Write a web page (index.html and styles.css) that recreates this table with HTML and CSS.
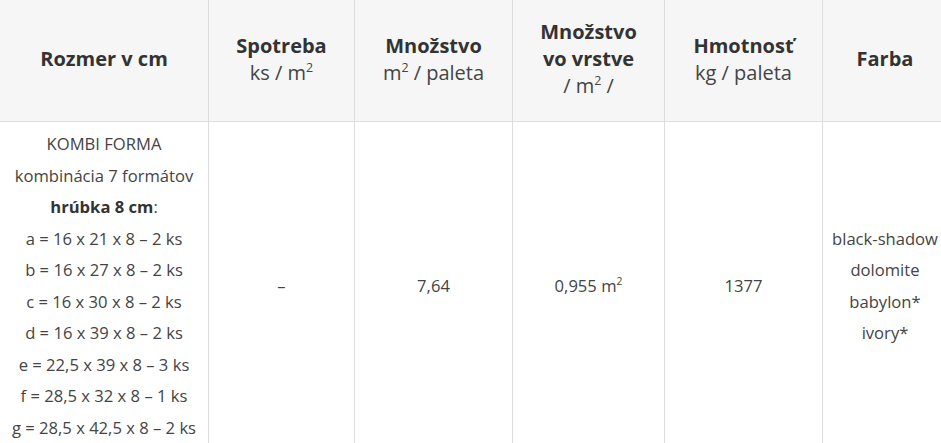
FILE: index.html
```html
<!DOCTYPE html>
<html lang="sk">
<head>
<meta charset="utf-8">
<link rel="stylesheet" href="styles.css">
</head>
<body>
<table class="spec">
  <colgroup>
    <col class="c1"><col class="c2"><col class="c3"><col class="c4"><col class="c5"><col class="c6">
  </colgroup>
  <thead>
    <tr>
      <th><strong>Rozmer v cm</strong></th>
      <th><strong>Spotreba</strong><br>ks / m<sup>2</sup></th>
      <th><strong>Množstvo</strong><br>m<sup>2</sup> / paleta</th>
      <th><strong>Množstvo<br>vo vrstve</strong><br>/ m<sup>2</sup> /</th>
      <th><strong>Hmotnosť</strong><br>kg / paleta</th>
      <th><strong>Farba</strong></th>
    </tr>
  </thead>
  <tbody>
    <tr>
      <td class="dims">KOMBI FORMA<br>kombinácia 7 formátov<br><strong>hrúbka 8 cm</strong>:<br>a = 16 x 21 x 8 – 2 ks<br>b = 16 x 27 x 8 – 2 ks<br>c = 16 x 30 x 8 – 2 ks<br>d = 16 x 39 x 8 – 2 ks<br>e = 22,5 x 39 x 8 – 3 ks<br>f = 28,5 x 32 x 8 – 1 ks<br>g = 28,5 x 42,5 x 8 – 2 ks</td>
      <td>–</td>
      <td>7,64</td>
      <td>0,955 m<sup>2</sup></td>
      <td>1377</td>
      <td>black-shadow<br>dolomite<br>babylon*<br>ivory*</td>
    </tr>
  </tbody>
</table>
</body>
</html>
```

FILE: styles.css
```css
html, body {
  margin: 0;
  padding: 0;
  background: #fff;
  overflow: hidden;
}
body {
  font-family: "Open Sans", "Liberation Sans", sans-serif;
  color: #444;
}
.spec {
  border-collapse: collapse;
  table-layout: fixed;
  width: 948px;
  margin: -1px 0 0 -1px;
}
.c1 { width: 209px; }
.c2 { width: 146px; }
.c3 { width: 158px; }
.c4 { width: 152px; }
.c5 { width: 158px; }
.c6 { width: 125px; }
.spec th, .spec td {
  border: 1px solid #dddddd;
  text-align: center;
  vertical-align: middle;
}
.spec th {
  background: #f6f6f6;
  font-size: 20px;
  line-height: 27px;
  font-weight: 400;
  color: #444;
  padding: 18px 4px 22px;
  height: 81px;
}
.spec th strong {
  font-weight: 700;
  color: #333;
}
.spec td {
  font-size: 16.6px;
  line-height: 31.5px;
  padding: 6px 2px 8px;
}
.spec td strong { font-weight: 700; color: #333; }
sup {
  font-size: 0.62em;
  line-height: 0;
  vertical-align: 0.65em;
}
```
